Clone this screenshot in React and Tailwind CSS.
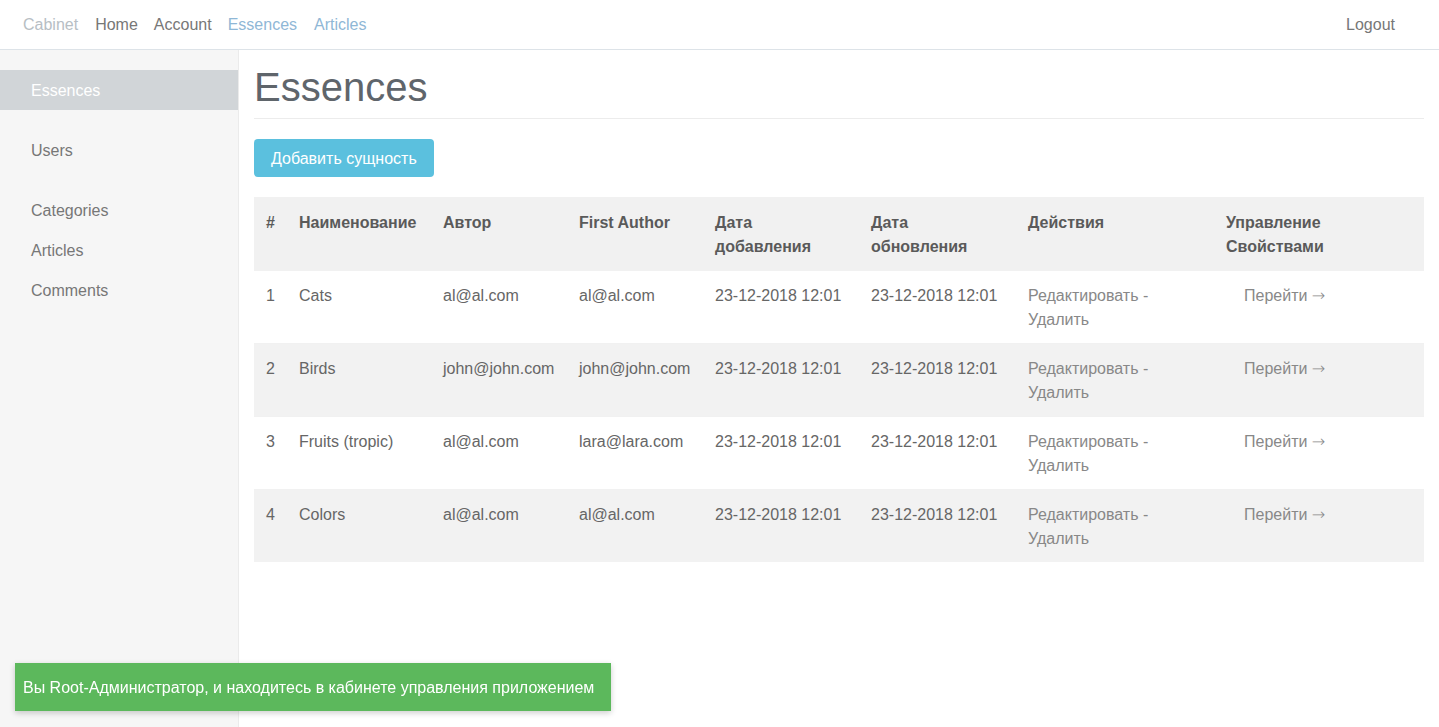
import React from 'react';

const rows = [
  { id: 1, name: 'Cats', author: 'al@al.com', first: 'al@al.com' },
  { id: 2, name: 'Birds', author: 'john@john.com', first: 'john@john.com' },
  { id: 3, name: 'Fruits (tropic)', author: 'al@al.com', first: 'lara@lara.com' },
  { id: 4, name: 'Colors', author: 'al@al.com', first: 'al@al.com' },
];

const font = { fontFamily: '"Liberation Sans", Arial, sans-serif' };

export default function App() {
  return (
    <div className="min-h-[727px] bg-white text-[16px] leading-6 text-[#666]" style={font}>
      {/* Top navbar */}
      <nav className="flex h-[50px] items-center justify-between border-b border-[#dde3e8] pl-[23px] pr-[44px]">
        <div className="flex items-center">
          <span className="mr-[17px] text-[#b7bec4]">Cabinet</span>
          <span className="mr-4 text-[#777]">Home</span>
          <span className="mr-4 text-[#777]">Account</span>
          <span className="mr-[17px] text-[#8fb7d6]">Essences</span>
          <span className="text-[#8fb7d6]">Articles</span>
        </div>
        <span className="text-[#777]">Logout</span>
      </nav>

      <div className="flex min-h-[677px]">
        {/* Sidebar */}
        <aside className="w-[239px] shrink-0 border-r border-[#ebebeb] bg-[#f6f6f6] pt-5">
          <div className="flex h-10 items-center bg-[#d1d5d8] pl-[31px] pt-[2px] text-white">Essences</div>
          <div className="mt-5 flex h-10 items-center pl-[31px] pt-[2px] text-[#777]">Users</div>
          <div className="mt-5 flex h-10 items-center pl-[31px] pt-[2px] text-[#777]">Categories</div>
          <div className="flex h-10 items-center pl-[31px] pt-[2px] text-[#777]">Articles</div>
          <div className="flex h-10 items-center pl-[31px] pt-[2px] text-[#777]">Comments</div>
        </aside>

        {/* Main content */}
        <main className="flex-1 pl-[15px] pr-[15px]">
          <h1 className="mt-[13px] border-b border-[#ececec] pb-[7px] text-[40px] leading-[48px] text-[#5f656b]">
            Essences
          </h1>
          <button className="mt-5 h-[38px] rounded bg-[#5bc0de] px-[17px] pt-[2px] text-white">
            Добавить сущность
          </button>

          <table className="mt-5 w-full table-fixed border-collapse text-left">
            <thead>
              <tr className="h-[73px] bg-[#f1f1f1] align-top font-bold text-[#5a5a5a]">
                <th className="w-[33px] pb-[10px] pl-3 pr-3 pt-[14px]">#</th>
                <th className="w-[144px] pb-[10px] pl-3 pr-3 pt-[14px]">Наименование</th>
                <th className="w-[136px] pb-[10px] pl-3 pr-3 pt-[14px]">Автор</th>
                <th className="w-[136px] pb-[10px] pl-3 pr-3 pt-[14px]">First Author</th>
                <th className="w-[156px] pb-[10px] pl-3 pr-3 pt-[14px]">Дата добавления</th>
                <th className="w-[157px] pb-[10px] pl-3 pr-3 pt-[14px]">Дата обновления</th>
                <th className="w-[198px] pb-[10px] pl-3 pr-3 pt-[14px]">Действия</th>
                <th className="pb-[10px] pl-3 pr-3 pt-[14px]">Управление Свойствами</th>
              </tr>
            </thead>
            <tbody>
              {rows.map((r, i) => (
                <tr
                  key={r.id}
                  className={
                    'h-[73px] border-t border-[#f1f1f1] align-top ' +
                    (i % 2 === 1 ? 'bg-[#f2f2f2]' : 'bg-white')
                  }
                >
                  <td className="pb-[11px] pl-3 pr-3 pt-[13px]">{r.id}</td>
                  <td className="pb-[11px] pl-3 pr-3 pt-[13px]">{r.name}</td>
                  <td className="pb-[11px] pl-3 pr-3 pt-[13px]">{r.author}</td>
                  <td className="pb-[11px] pl-3 pr-3 pt-[13px]">{r.first}</td>
                  <td className="whitespace-nowrap pb-[11px] pl-3 pr-3 pt-[13px]">23-12-2018 12:01</td>
                  <td className="whitespace-nowrap pb-[11px] pl-3 pr-3 pt-[13px]">23-12-2018 12:01</td>
                  <td className="pb-[11px] pl-3 pr-3 pt-[13px] text-[#888]">
                    Редактировать -<br />
                    Удалить
                  </td>
                  <td className="pb-[11px] pl-[30px] pr-3 pt-[13px] text-[#888]">
                    Перейти{' '}
                    <span className="text-[16px] font-light" style={{ fontFamily: '"DejaVu Sans", sans-serif' }}>
                      →
                    </span>
                  </td>
                </tr>
              ))}
            </tbody>
          </table>
        </main>
      </div>

      {/* Status toast */}
      <div className="fixed bottom-4 left-[15px] flex h-12 w-[596px] items-center bg-[#5cb85c] pl-[8px] pt-[2px] text-white shadow-[0_2px_6px_rgba(0,0,0,0.2)]">
        Вы Root-Администратор, и находитесь в кабинете управления приложением
      </div>
    </div>
  );
}
